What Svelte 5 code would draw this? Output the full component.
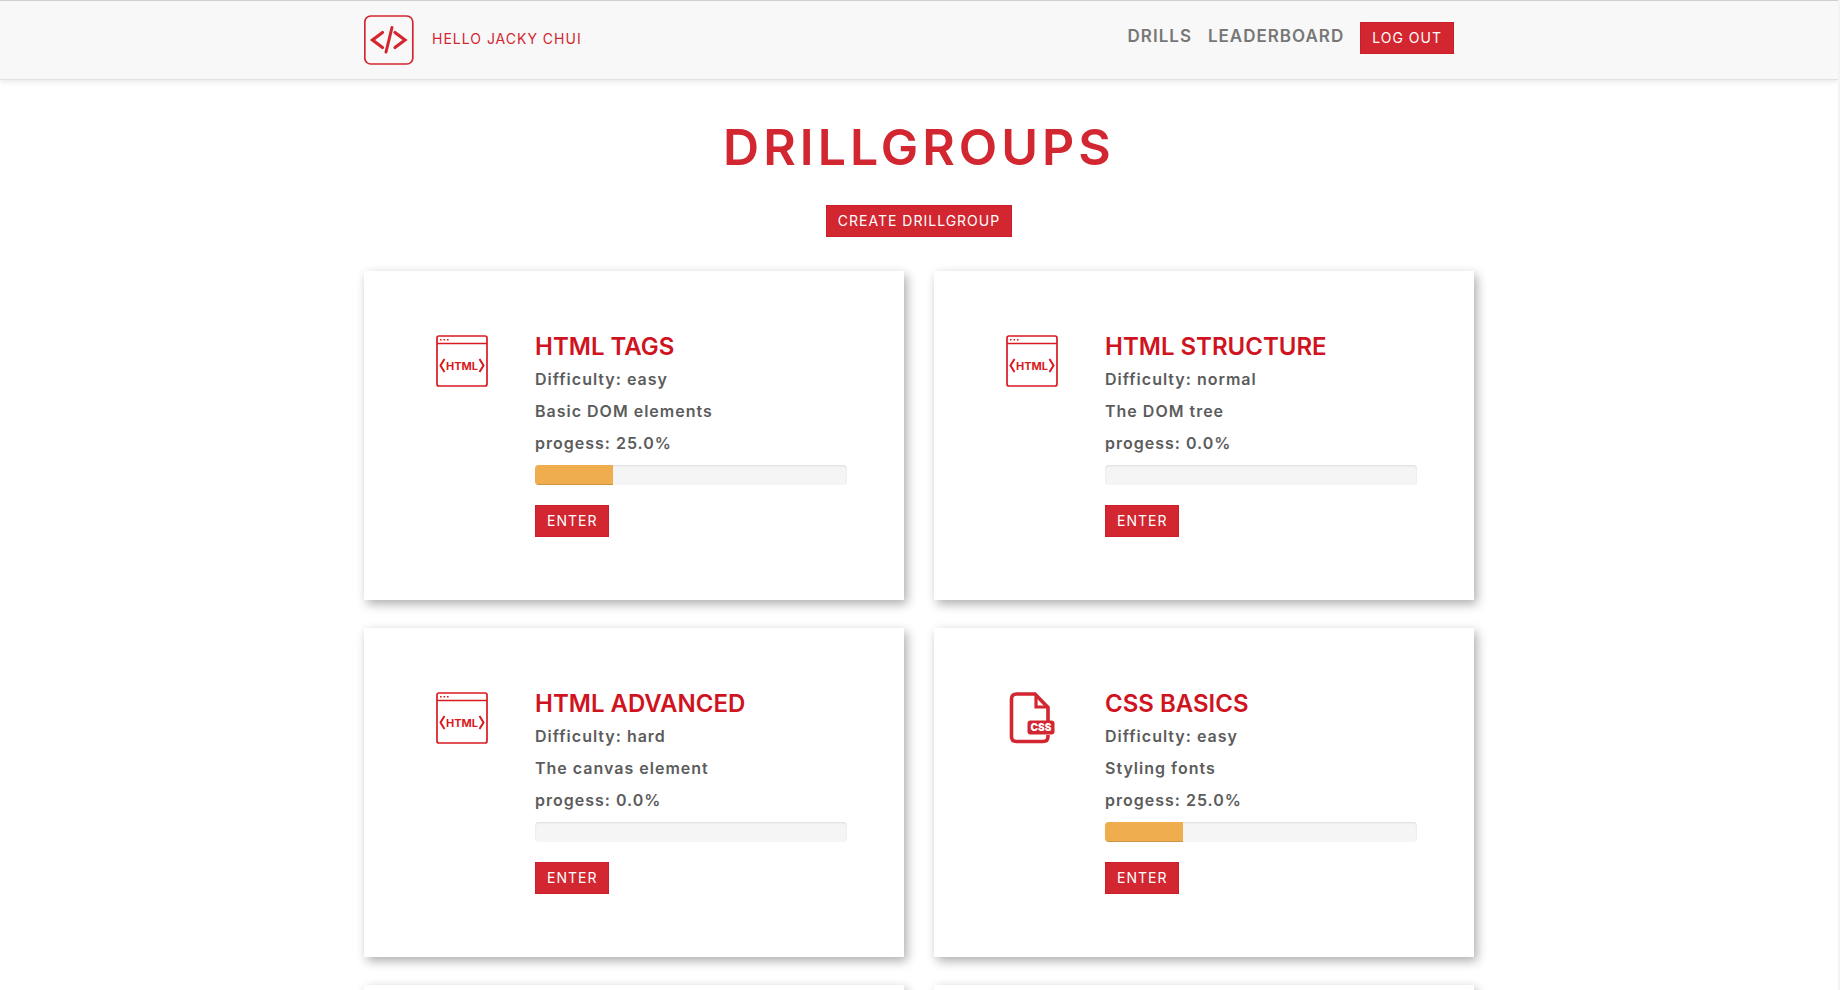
<script>
  const groups = [
    { title: 'HTML TAGS', difficulty: 'easy', about: 'Basic DOM elements', progress: 25, icon: 'html' },
    { title: 'HTML STRUCTURE', difficulty: 'normal', about: 'The DOM tree', progress: 0, icon: 'html' },
    { title: 'HTML ADVANCED', difficulty: 'hard', about: 'The canvas element', progress: 0, icon: 'html' },
    { title: 'CSS BASICS', difficulty: 'easy', about: 'Styling fonts', progress: 25, icon: 'css' }
  ];
</script>

<div class="page">
  <header>
    <div class="container bar">
      <a class="brand" href="#home" aria-label="Home">
        <svg width="50" height="50" viewBox="0 0 50 50" fill="none" stroke="#d22630">
          <rect x="0.800" y="1" width="48" height="48" rx="6" stroke-width="1.700" />
          <path d="M18.500 17.500 L8.500 25 L18.500 32.500 M31 17.500 L41 25 L31 32.500" stroke-width="3.200" stroke-linecap="round" stroke-linejoin="miter" />
          <path d="M28 12.500 L22 37" stroke-width="3" stroke-linecap="round" />
        </svg>
      </a>
      <span class="hello">HELLO JACKY CHUI</span>
      <nav>
        <a href="#drills">DRILLS</a>
        <a href="#leaderboard">LEADERBOARD</a>
        <button class="btn" type="button">LOG OUT</button>
      </nav>
    </div>
  </header>

  <main class="container">
    <h1>DRILLGROUPS</h1>
    <button class="btn create" type="button">CREATE DRILLGROUP</button>

    <div class="grid">
      {#each groups as g}
        <article class="card">
          <div class="icon">
            {#if g.icon === 'html'}
              <svg width="52" height="52" viewBox="0 0 52 52" fill="none" stroke="#d91a21">
                <rect x="1" y="1" width="50" height="50" rx="2" stroke-width="1.700" />
                <path d="M1 8.500 H51" stroke-width="1.700" />
                <path d="M4 4.800 h1.600 M7.500 4.800 h1.600 M11 4.800 h1.600" stroke-width="1.600" />
                <path d="M8.500 24 L4.500 30.500 L8.500 37 M43.500 24 L47.500 30.500 L43.500 37" stroke-width="2" />
                <text x="26" y="34.500" text-anchor="middle" class="html-label">HTML</text>
              </svg>
            {:else}
              <svg width="52" height="52" viewBox="0 0 52 52" fill="none" stroke="#d22630">
                <path d="M42 29 V15.500 L29 2 H10.500 Q5.500 2 5.500 7 V44.500 Q5.500 49.500 10.500 49.500 H37 Q42 49.500 42 44.500 V43" stroke-width="3.600" />
                <path d="M30 3 V15 H41.500" stroke-width="3.200" />
                <rect x="21.500" y="28.500" width="27" height="14" rx="3" fill="#d22630" stroke="none" />
                <text x="35" y="39.200" text-anchor="middle" class="css-label">CSS</text>
              </svg>
            {/if}
          </div>
          <div class="info">
            <h2>{g.title}</h2>
            <p>Difficulty: {g.difficulty}</p>
            <p>{g.about}</p>
            <p>progess: {g.progress.toFixed(1)}%</p>
            <div class="track" role="progressbar" aria-label={g.title} aria-valuenow={g.progress} aria-valuemin="0" aria-valuemax="100">
              <div class="fill" style="width: {g.progress}%"></div>
            </div>
            <button class="btn" type="button">ENTER</button>
          </div>
        </article>
      {/each}
      <article class="card"></article>
      <article class="card"></article>
    </div>
  </main>
</div>

<style>
  .page {
    box-sizing: border-box;
    height: 100vh;
    overflow: hidden;
    border-right: 2px solid #f3f3f3;
    background: #fff;
    font-family: Inter, "Open Sans", sans-serif;
    font-size: 16px;
    color: #5c5c5c;
  }
  .container {
    box-sizing: border-box;
    max-width: 1140px;
    margin: 0 auto;
    padding: 0 15px;
  }
  header {
    background: #f8f8f8;
    border-top: 1px solid #cfcfcf;
    border-bottom: 1px solid #e2e2e2;
    box-shadow: 0 1px 6px rgba(0, 0, 0, 0.12);
  }
  .bar {
    display: flex;
    align-items: flex-start;
    padding-top: 14px;
    padding-bottom: 14px;
  }
  .brand {
    display: flex;
  }
  .hello {
    margin-left: 18px;
    line-height: 48px;
    font-size: 14px;
    letter-spacing: 1px;
    color: #d22630;
  }
  nav {
    display: flex;
    align-items: flex-start;
    gap: 16px;
    margin: 7px 20px 0 auto;
  }
  nav a {
    line-height: 28px;
    font-size: 17px;
    font-weight: 600;
    letter-spacing: 1px;
    color: #777;
    text-decoration: none;
  }
  .btn {
    box-sizing: border-box;
    height: 32px;
    padding: 0 11px;
    border: 1px solid #cc1f2b;
    background: #d22630;
    color: #fff;
    font-family: inherit;
    font-size: 14px;
    line-height: 30px;
    letter-spacing: 1px;
    cursor: pointer;
  }
  h1 {
    margin: 37px 0 0;
    text-align: center;
    font-size: 50px;
    line-height: 60px;
    font-weight: 600;
    letter-spacing: 4px;
    color: #d22630;
  }
  .create {
    display: block;
    margin: 28px auto 34px;
  }
  .grid {
    display: grid;
    grid-template-columns: 1fr 1fr;
    gap: 28px 30px;
  }
  .card {
    box-sizing: border-box;
    display: grid;
    grid-template-columns: 114px 1fr;
    align-items: start;
    min-height: 329px;
    padding: 60px 57px;
    background: #fff;
    box-shadow: 3px 4px 10px rgba(0, 0, 0, 0.32);
  }
  .icon {
    display: flex;
    padding: 4px 0 0 15px;
  }
  .html-label {
    font-family: Inter, sans-serif;
    font-size: 11px;
    font-weight: 700;
    fill: #d91a21;
    stroke: none;
  }
  .css-label {
    font-family: Inter, sans-serif;
    font-size: 10px;
    font-weight: 900;
    fill: #fff;
    stroke: none;
  }
  h2 {
    margin: 0;
    font-size: 24px;
    line-height: 32px;
    font-weight: 600;
    color: #d0141f;
  }
  p {
    margin: 0;
    font-size: 16px;
    line-height: 32px;
    font-weight: 600;
    letter-spacing: 1px;
  }
  .track {
    height: 20px;
    margin: 6px 0 20px;
    overflow: hidden;
    border-radius: 4px;
    background: #f5f5f5;
    box-shadow: inset 0 1px 2px rgba(0, 0, 0, 0.1);
  }
  .fill {
    height: 100%;
    background: #f0ad4e;
    box-shadow: inset 0 -1px 0 rgba(0, 0, 0, 0.15);
  }
</style>
